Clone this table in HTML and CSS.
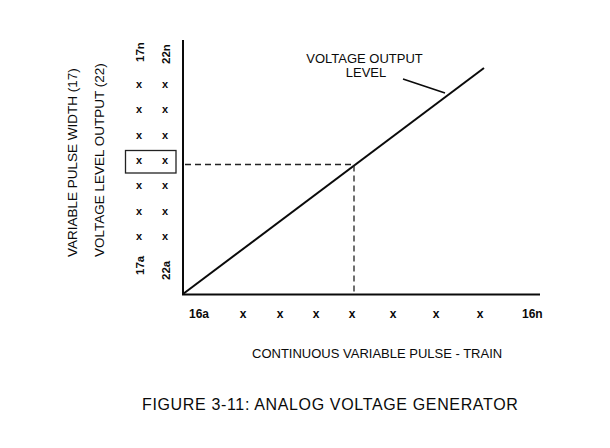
FILE: index.html
```html
<!DOCTYPE html>
<html>
<head>
<meta charset="utf-8">
<link rel="stylesheet" href="styles.css">
</head>
<body>
<figure class="fig">
<svg class="chart" width="610" height="396" viewBox="0 0 610 396" xmlns="http://www.w3.org/2000/svg">
  <!-- axes -->
  <path class="axis" d="M183 40 V294.5 H540"/>
  <!-- output level line -->
  <path class="axis" d="M183 294 L484 68"/>
  <!-- leader -->
  <path class="thin" d="M403 79 L445 93"/>
  <!-- dashed guides -->
  <path class="dash" d="M185 164.5 H354 V293"/>
  <!-- highlight box -->
  <rect class="box" x="125.5" y="150.5" width="50.5" height="22.5"/>

  <!-- rotated axis titles -->
  <text class="lbl" transform="translate(76.5 257) rotate(-90)">VARIABLE PULSE WIDTH (17)</text>
  <text class="lbl" transform="translate(103.5 257) rotate(-90)">VOLTAGE LEVEL OUTPUT (22)</text>

  <!-- column end labels -->
  <text class="tag" transform="translate(143.5 62) rotate(-90)">17n</text>
  <text class="tag" transform="translate(169.5 64) rotate(-90)">22n</text>
  <text class="tag" transform="translate(143.5 275) rotate(-90)">17a</text>
  <text class="tag" transform="translate(169.5 280) rotate(-90)">22a</text>

  <!-- column marks -->
  <g class="mark">
    <text x="139" y="88">x</text><text x="165" y="88">x</text>
    <text x="139" y="113">x</text><text x="165" y="113">x</text>
    <text x="139" y="138.5">x</text><text x="165" y="138.5">x</text>
    <text x="139" y="164">x</text><text x="165" y="164">x</text>
    <text x="139" y="189">x</text><text x="165" y="189">x</text>
    <text x="139" y="214.5">x</text><text x="165" y="214.5">x</text>
    <text x="139" y="240">x</text><text x="165" y="240">x</text>
  </g>

  <!-- bottom axis labels -->
  <text class="tag" x="189" y="318">16a</text>
  <text class="tag" x="522" y="318">16n</text>
  <g class="mark bmark">
    <text x="243" y="318">x</text>
    <text x="280" y="318">x</text>
    <text x="316" y="318">x</text>
    <text x="352" y="318">x</text>
    <text x="393" y="318">x</text>
    <text x="436" y="318">x</text>
    <text x="480" y="318">x</text>
  </g>

  <!-- line label -->
  <text class="lbl small" x="364.5" y="63" text-anchor="middle">VOLTAGE OUTPUT</text>
  <text class="lbl small" x="366" y="77" text-anchor="middle">LEVEL</text>

  <!-- x axis title -->
  <text class="lbl small" x="252" y="358">CONTINUOUS VARIABLE PULSE - TRAIN</text>
</svg>
<figcaption class="caption">FIGURE 3-11: ANALOG VOLTAGE GENERATOR</figcaption>
</figure>
</body>
</html>
```
FILE: styles.css
```css
html, body {
  margin: 0;
  padding: 0;
  background: #ffffff;
}

body {
  width: 610px;
  height: 448px;
  overflow: hidden;
  font-family: "Liberation Sans", Arial, sans-serif;
  color: #0a0a0a;
}

.fig {
  margin: 0;
}

.chart {
  display: block;
}

.axis {
  fill: none;
  stroke: #0a0a0a;
  stroke-width: 2;
}

.thin {
  fill: none;
  stroke: #0a0a0a;
  stroke-width: 1.7;
}

.dash {
  fill: none;
  stroke: #222222;
  stroke-width: 1.3;
  stroke-dasharray: 6 4;
}

.box {
  fill: none;
  stroke: #222222;
  stroke-width: 1.3;
}

.lbl {
  font-family: "Liberation Sans", Arial, sans-serif;
  font-size: 13.5px;
  fill: #0a0a0a;
}

.lbl.small {
  font-size: 13px;
}

.tag {
  font-family: "Liberation Sans", Arial, sans-serif;
  font-size: 11.5px;
  font-weight: bold;
  fill: #0a0a0a;
}

text.tag[x] {
  font-size: 12px;
}

.mark {
  font-family: "Liberation Sans", Arial, sans-serif;
  font-size: 11px;
  font-weight: bold;
  fill: #0a0a0a;
  text-anchor: middle;
}

.bmark {
  font-size: 12px;
}

.caption {
  margin: 0;
  padding-left: 142px;
  font-size: 16px;
  line-height: 18px;
  letter-spacing: 0.65px;
  white-space: nowrap;
}
```
